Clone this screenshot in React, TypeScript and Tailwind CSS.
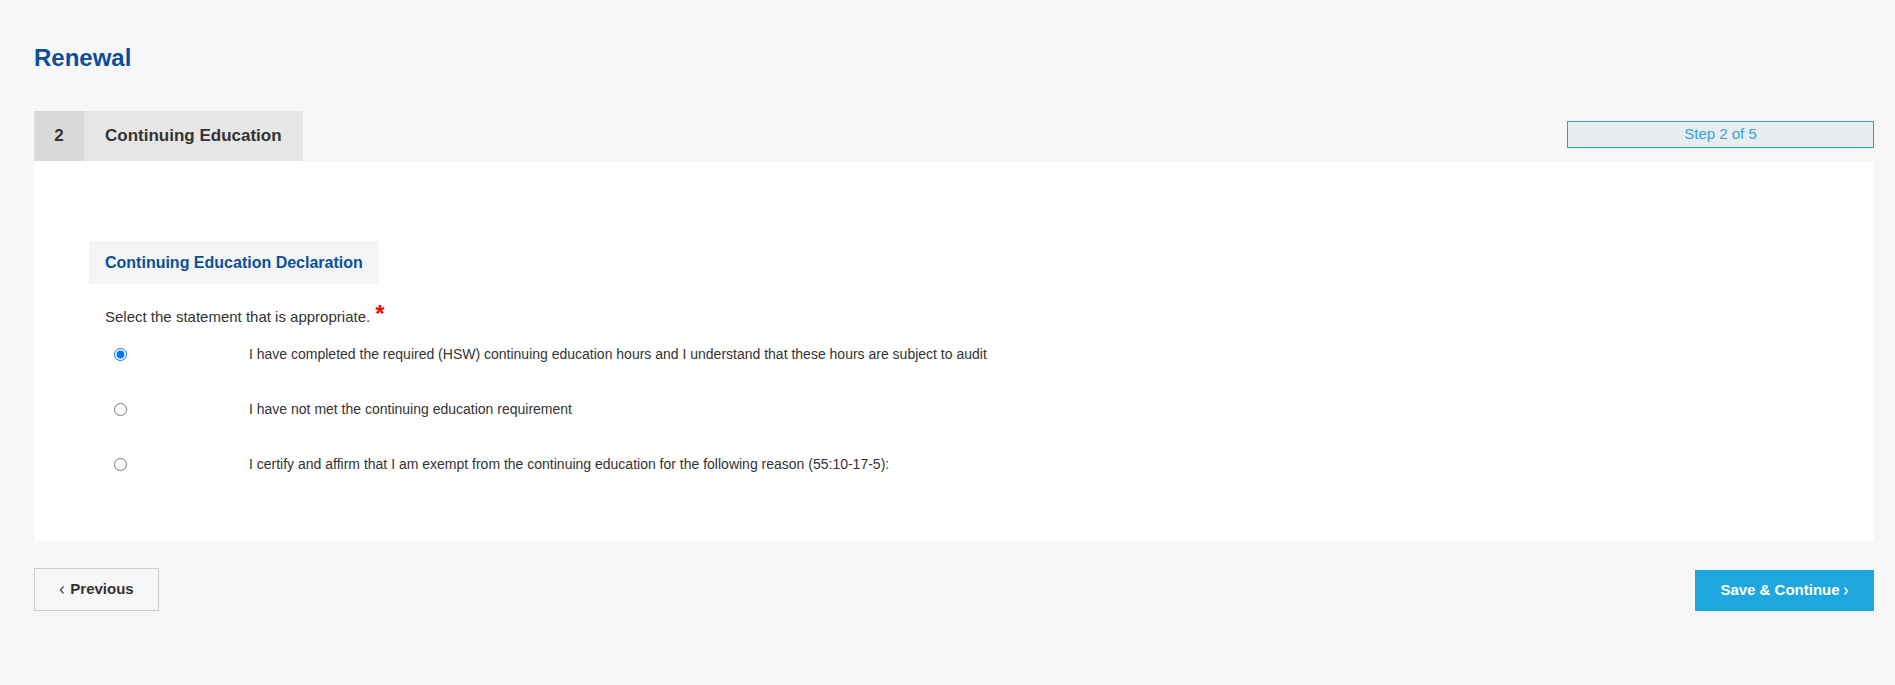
import { useState } from 'react'

const options = [
  'I have completed the required (HSW) continuing education hours and I understand that these hours are subject to audit',
  'I have not met the continuing education requirement',
  'I certify and affirm that I am exempt from the continuing education for the following reason (55:10-17-5):',
]

function Chevron({ dir }: { dir: 'left' | 'right' }) {
  return (
    <svg width="6" height="10" viewBox="0 0 6 10" className="shrink-0">
      <path
        d={dir === 'left' ? 'M4.5 1.5 1.5 5l3 3.5' : 'M1.5 1.5 4.5 5l-3 3.5'}
        fill="none"
        stroke="currentColor"
        strokeWidth="1.4"
      />
    </svg>
  )
}

export default function App() {
  const [choice, setChoice] = useState(0)

  return (
    <div
      className="min-h-screen bg-[#f7f7f7] pl-[34px] pr-[21px] pt-[44px] text-[#333]"
      style={{ fontFamily: '"Liberation Sans", Arial, sans-serif' }}
    >
      {/* Title */}
      <h1 className="text-[24px] leading-[28px] font-bold text-[#0b4f9c]">Renewal</h1>

      {/* Step header */}
      <div className="mt-[39px] flex items-start justify-between">
        <div className="flex h-[50px]">
          <div className="flex w-[50px] items-center justify-center bg-[#d9d9d9] text-[17px] font-bold">
            2
          </div>
          <div className="flex items-center bg-[#e6e6e6] px-[21px] text-[17px] font-bold">
            Continuing Education
          </div>
        </div>
        <div className="mt-[10px] flex h-[27px] w-[307px] items-center justify-center border border-[#2e9fd6] bg-[#e8edf2] text-[15px] text-[#3aa0d8]">
          Step 2 of 5
        </div>
      </div>

      {/* Form panel */}
      <div className="bg-white pl-[55px] pt-[80px] pb-[49px]">
        <div className="inline-flex h-[43px] items-center bg-[#f5f5f5] px-[16px] text-[16px] font-bold text-[#0b4f9c]">
          Continuing Education Declaration
        </div>

        <div className="mt-[23px] pl-[16px]">
          <p className="flex h-[20px] items-center text-[15px] leading-[20px]">
            Select the statement that is appropriate.
            <span className="ml-[5px] -mt-[6px] text-[24px] font-bold leading-none text-[#ff0000]">*</span>
          </p>

          {options.map((text, i) => (
            <label key={i} className="flex h-[55px] cursor-pointer items-center text-[14px]">
              <span className="flex w-[144px] shrink-0 items-center">
                <input
                  type="radio"
                  name="ce"
                  checked={choice === i}
                  onChange={() => setChoice(i)}
                  className="m-0 ml-[9px] h-[13px] w-[13px]"
                />
              </span>
              <span>{text}</span>
            </label>
          ))}
        </div>
      </div>

      {/* Navigation */}
      <div className="mt-[27px] flex items-end justify-between">
        <button className="flex h-[43px] w-[125px] items-center justify-center gap-[5px] border border-[#cccccc] text-[15px] font-bold text-[#333]">
          <span className="text-[#555]">
            <Chevron dir="left" />
          </span>
          Previous
        </button>
        <button className="flex h-[41px] w-[179px] items-center justify-center gap-[3px] bg-[#1ea6df] text-[15px] font-bold text-white">
          Save &amp; Continue
          <Chevron dir="right" />
        </button>
      </div>
    </div>
  )
}
